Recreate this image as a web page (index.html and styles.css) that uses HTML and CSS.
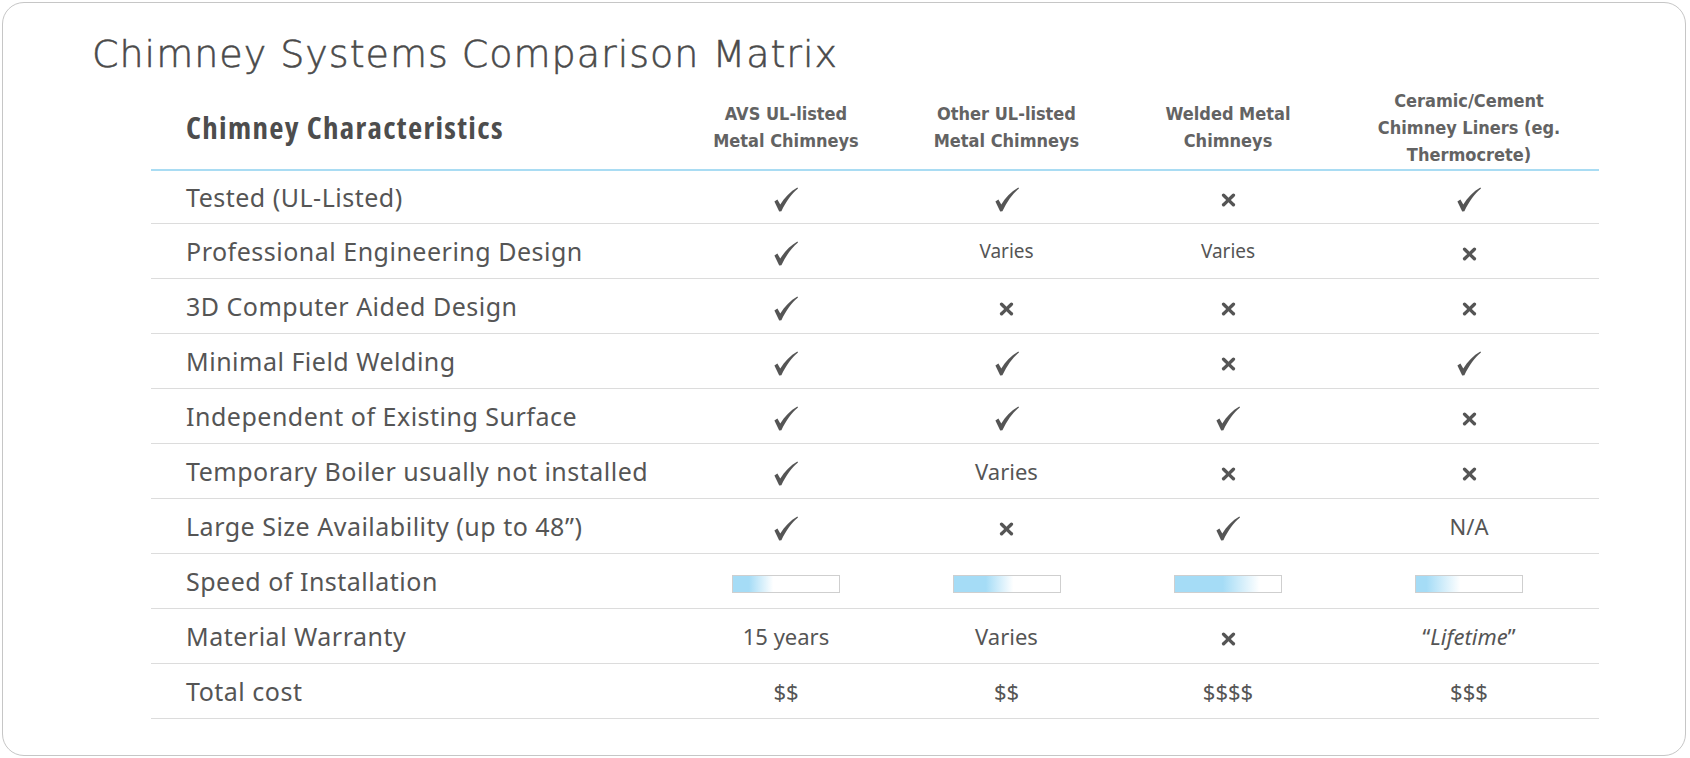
FILE: index.html
```html
<!DOCTYPE html>
<html lang="en">
<head>
<meta charset="utf-8">
<title>Chimney Systems Comparison Matrix</title>
<link rel="stylesheet" href="styles.css">
</head>
<body>
<svg width="0" height="0" class="defs" aria-hidden="true">
  <defs>
    <symbol id="chk" viewBox="0 0 24 25">
      <path d="M0.4 14.6 L3.4 12.6 L6.3 17.6 C10.4 10.6 16.4 4.6 23.4 0.6 L24 1.5 C17.8 6.6 12.2 14.2 7.4 24.2 L5.2 24.6 Z"/>
    </symbol>
    <symbol id="crs" viewBox="0 0 15 14">
      <path d="M2.6 2.2 C5.2 4.6 8.8 8.4 12.4 11.8" fill="none" stroke-width="3.4" stroke-linecap="round"/>
      <path d="M12.4 2.2 C9.8 4.6 6.2 8.4 2.6 11.8" fill="none" stroke-width="3.4" stroke-linecap="round"/>
    </symbol>
  </defs>
</svg>
<div class="card">
  <h1 class="title">Chimney Systems Comparison Matrix</h1>
  <table class="matrix">
    <colgroup>
      <col class="c-label">
      <col class="c-2">
      <col class="c-3">
      <col class="c-4">
      <col class="c-5">
    </colgroup>
    <thead>
      <tr>
        <th class="h-label">Chimney Characteristics</th>
        <th class="h-col">AVS UL-listed<br>Metal Chimneys</th>
        <th class="h-col">Other UL-listed<br>Metal Chimneys</th>
        <th class="h-col">Welded Metal<br>Chimneys</th>
        <th class="h-col">Ceramic/Cement<br>Chimney Liners (eg.<br>Thermocrete)</th>
      </tr>
    </thead>
    <tbody>
      <tr>
        <td class="label">Tested (UL-Listed)</td>
        <td><svg class="ic-chk"><use href="#chk"/></svg></td>
        <td><svg class="ic-chk"><use href="#chk"/></svg></td>
        <td><svg class="ic-crs"><use href="#crs"/></svg></td>
        <td><svg class="ic-chk"><use href="#chk"/></svg></td>
      </tr>
      <tr>
        <td class="label">Professional Engineering Design</td>
        <td><svg class="ic-chk"><use href="#chk"/></svg></td>
        <td class="small">Varies</td>
        <td class="small">Varies</td>
        <td><svg class="ic-crs"><use href="#crs"/></svg></td>
      </tr>
      <tr>
        <td class="label">3D Computer Aided Design</td>
        <td><svg class="ic-chk"><use href="#chk"/></svg></td>
        <td><svg class="ic-crs"><use href="#crs"/></svg></td>
        <td><svg class="ic-crs"><use href="#crs"/></svg></td>
        <td><svg class="ic-crs"><use href="#crs"/></svg></td>
      </tr>
      <tr>
        <td class="label">Minimal Field Welding</td>
        <td><svg class="ic-chk"><use href="#chk"/></svg></td>
        <td><svg class="ic-chk"><use href="#chk"/></svg></td>
        <td><svg class="ic-crs"><use href="#crs"/></svg></td>
        <td><svg class="ic-chk"><use href="#chk"/></svg></td>
      </tr>
      <tr>
        <td class="label">Independent of Existing Surface</td>
        <td><svg class="ic-chk"><use href="#chk"/></svg></td>
        <td><svg class="ic-chk"><use href="#chk"/></svg></td>
        <td><svg class="ic-chk"><use href="#chk"/></svg></td>
        <td><svg class="ic-crs"><use href="#crs"/></svg></td>
      </tr>
      <tr>
        <td class="label">Temporary Boiler usually not installed</td>
        <td><svg class="ic-chk"><use href="#chk"/></svg></td>
        <td>Varies</td>
        <td><svg class="ic-crs"><use href="#crs"/></svg></td>
        <td><svg class="ic-crs"><use href="#crs"/></svg></td>
      </tr>
      <tr>
        <td class="label">Large Size Availability (up to 48”)</td>
        <td><svg class="ic-chk"><use href="#chk"/></svg></td>
        <td><svg class="ic-crs"><use href="#crs"/></svg></td>
        <td><svg class="ic-chk"><use href="#chk"/></svg></td>
        <td>N/A</td>
      </tr>
      <tr>
        <td class="label">Speed of Installation</td>
        <td><span class="bar bar-1"></span></td>
        <td><span class="bar bar-2"></span></td>
        <td><span class="bar bar-3"></span></td>
        <td><span class="bar bar-4"></span></td>
      </tr>
      <tr>
        <td class="label">Material Warranty</td>
        <td>15 years</td>
        <td>Varies</td>
        <td><svg class="ic-crs"><use href="#crs"/></svg></td>
        <td>“<em>Lifetime</em>”</td>
      </tr>
      <tr>
        <td class="label">Total cost</td>
        <td>$$</td>
        <td>$$</td>
        <td>$$$$</td>
        <td>$$$</td>
      </tr>
    </tbody>
  </table>
</div>
</body>
</html>
```
FILE: styles.css
```css
html, body {
  margin: 0;
  padding: 0;
  background: #ffffff;
}

body {
  font-family: "Noto Sans", "Open Sans", sans-serif;
  color: #555555;
}

.defs {
  position: absolute;
  width: 0;
  height: 0;
  overflow: hidden;
}

.card {
  margin: 2px 4px 2px 2px;
  height: 754px;
  box-sizing: border-box;
  border: 1px solid #c6c6c6;
  border-radius: 22px;
  padding: 29px 86px 0 89px;
  background: #ffffff;
}

.title {
  margin: 0;
  font-family: "DejaVu Sans", "Liberation Sans", sans-serif;
  font-weight: 200;
  font-size: 38px;
  line-height: 44px;
  letter-spacing: 1px;
  color: #4a4a4a;
  -webkit-text-stroke: 0.55px #4a4a4a;
}

.matrix {
  margin: 9px 0 0 59px;
  width: 1448px;
  border-collapse: collapse;
  table-layout: fixed;
}

.c-label { width: 525px; }
.c-2 { width: 220px; }
.c-3 { width: 221px; }
.c-4 { width: 222px; }
.c-5 { width: 260px; }

.matrix th {
  height: 84px;
  padding: 0;
  vertical-align: middle;
  border-bottom: 2px solid #a9dcf3;
}

.h-label {
  text-align: left;
  padding-left: 35px !important;
  font-family: "Open Sans", "Liberation Sans", sans-serif;
  font-stretch: 75%;
  font-weight: 700;
  font-size: 31px;
  letter-spacing: 1.3px;
  color: #4d4d4d;
}

.h-col {
  text-align: center;
  font-family: "DejaVu Sans Condensed", "DejaVu Sans", sans-serif;
  font-stretch: condensed;
  font-weight: 700;
  font-size: 18px;
  line-height: 27px;
  color: #636363;
}

.matrix td {
  height: 54px;
  padding: 0;
  vertical-align: middle;
  text-align: center;
  border-bottom: 1px solid #dcdcdc;
  font-size: 22px;
  color: #555555;
}

.matrix tbody tr:first-child td {
  height: 52px;
}

.matrix td.label {
  text-align: left;
  padding-left: 35px;
  font-size: 25px;
  letter-spacing: 0.5px;
}

.matrix td.small {
  font-size: 19px;
}

.matrix em {
  font-style: italic;
}

.ic-chk {
  display: inline-block;
  width: 24px;
  height: 25px;
  vertical-align: middle;
  fill: #555555;
}

.ic-crs {
  display: inline-block;
  width: 15px;
  height: 14px;
  vertical-align: middle;
  stroke: #555555;
}

.bar {
  display: inline-block;
  width: 108px;
  height: 18px;
  box-sizing: border-box;
  border: 1px solid #cfcfcf;
  vertical-align: middle;
}

.bar-1 { background: linear-gradient(to right, #a5dcf6 0%, #a5dcf6 15%, #ffffff 38%); }
.bar-2 { background: linear-gradient(to right, #a5dcf6 0%, #a5dcf6 30%, #ffffff 56%); }
.bar-3 { background: linear-gradient(to right, #a5dcf6 0%, #a5dcf6 45%, #ffffff 80%); }
.bar-4 { background: linear-gradient(to right, #a5dcf6 0%, #a5dcf6 10%, #ffffff 42%); }
```
